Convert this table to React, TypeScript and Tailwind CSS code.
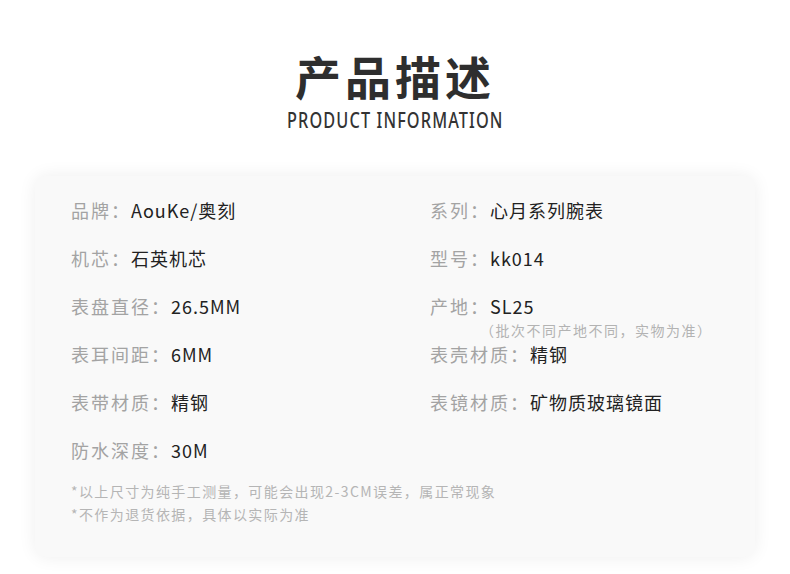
import React from 'react';

const cjk = '"Noto Sans CJK SC", "Noto Sans", sans-serif';

interface Spec {
  label: string;
  value: string;
  note?: string;
}

const leftSpecs: Spec[] = [
  { label: '品牌', value: 'AouKe/奥刻' },
  { label: '机芯', value: '石英机芯' },
  { label: '表盘直径', value: '26.5MM' },
  { label: '表耳间距', value: '6MM' },
  { label: '表带材质', value: '精钢' },
  { label: '防水深度', value: '30M' },
];

const rightSpecs: Spec[] = [
  { label: '系列', value: '心月系列腕表' },
  { label: '型号', value: 'kk014' },
  { label: '产地', value: 'SL25', note: '（批次不同产地不同，实物为准）' },
  { label: '表壳材质', value: '精钢' },
  { label: '表镜材质', value: '矿物质玻璃镜面' },
];

function SpecItem({ label, value, note }: Spec) {
  return (
    <div className="h-6 flex flex-col">
      <div className="flex items-center h-6 text-[18px] leading-6 whitespace-nowrap">
        <span className="text-[#a3a3a3] tracking-[2px]">{label}：</span>
        <span className="text-[#222222] tracking-[1px]">{value}</span>
      </div>
      {note && (
        <div className="mt-[3px] ml-[50px] text-[14px] leading-[18px] tracking-[1.5px] text-[#b3b3b3] whitespace-nowrap">
          {note}
        </div>
      )}
    </div>
  );
}

export default function App() {
  const rows = leftSpecs.map((l, i) => [l, rightSpecs[i]] as const);
  return (
    <div className="w-[790px] h-[574px] bg-white overflow-hidden" style={{ fontFamily: cjk }}>
      <div className="flex flex-col items-center">
        <h1 className="mt-[52px] text-[46px] leading-[46px] font-bold tracking-[4px] text-[#2e2e2e]">产品描述</h1>
        <div
          className="mt-[11px] text-[22px] leading-[20px] font-medium tracking-[1.5px] text-[#333333] scale-x-[0.74]"
          style={{ fontFamily: '"Noto Sans", sans-serif' }}
        >
          PRODUCT INFORMATION
        </div>
      </div>

      <div className="mt-[47px] ml-[35px] w-[720px] rounded-xl bg-[#f9f9f9] shadow-[0_0_18px_rgba(0,0,0,0.07)] pt-[22px] pl-[36px] pb-[31px]">
        <div className="grid grid-cols-[359px_1fr] gap-y-6">
          {rows.map(([l, r], i) => (
            <React.Fragment key={i}>
              <SpecItem {...l} />
              {r ? <SpecItem {...r} /> : <div className="h-6" />}
            </React.Fragment>
          ))}
        </div>
        <div className="mt-[18px] text-[14px] leading-[23px] tracking-[1.4px] text-[#b5b5b5]">
          <p>*以上尺寸为纯手工测量，可能会出现2-3CM误差，属正常现象</p>
          <p>*不作为退货依据，具体以实际为准</p>
        </div>
      </div>
    </div>
  );
}
